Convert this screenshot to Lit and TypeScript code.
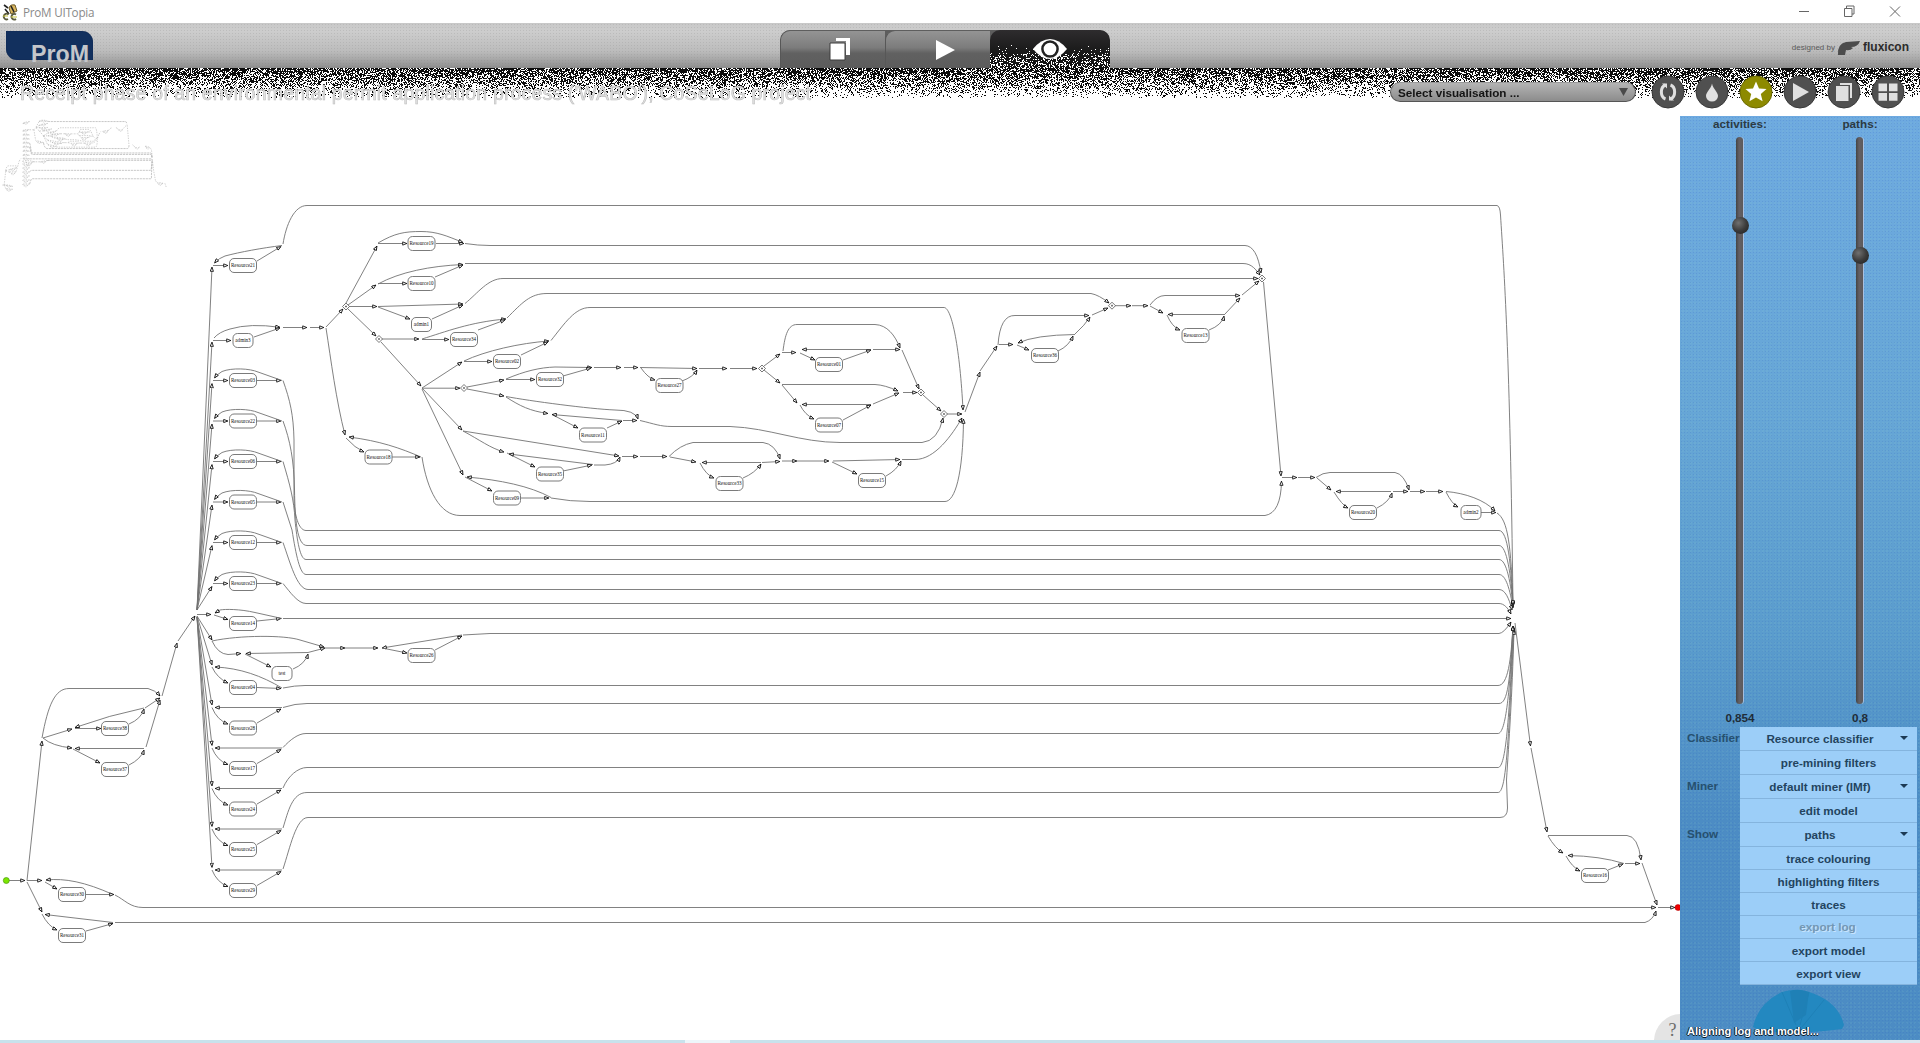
import { LitElement, html, svg, css } from "lit";
import { customElement } from "lit/decorators.js";

type Node = [label: string, x: number, y: number];

const NODES: Node[] = [
  ["Resource21", 243, 265.5], ["admin3", 243, 340.5], ["Resource03", 243, 380.5],
  ["Resource22", 243, 421], ["Resource06", 243, 461.5], ["Resource05", 243, 502],
  ["Resource12", 243, 542.5], ["Resource23", 243, 583.5], ["Resource14", 243, 623.5],
  ["test", 282, 673.5], ["Resource26", 421.5, 655.5], ["Resource04", 243, 687.5],
  ["Resource28", 243, 728], ["Resource17", 243, 768.5], ["Resource24", 243, 809],
  ["Resource25", 243, 849.5], ["Resource29", 243, 890.5],
  ["Resource19", 421.5, 243.5], ["Resource10", 421.5, 283.5], ["admin1", 421.5, 324.5],
  ["Resource34", 464, 339.5], ["Resource02", 507, 361.5], ["Resource32", 550, 379.5],
  ["Resource11", 593, 435], ["Resource35", 550, 474], ["Resource09", 507, 498],
  ["Resource18", 378.5, 457], ["Resource27", 669.5, 385.5], ["Resource01", 829, 364.5],
  ["Resource07", 829, 425], ["Resource33", 729.5, 483.5], ["Resource15", 872, 480.5],
  ["Resource36", 1045, 355.5], ["Resource13", 1195.5, 335.5], ["Resource20", 1363, 512.5],
  ["admin2", 1471, 512.5], ["Resource38", 115, 728.5], ["Resource37", 115, 769.5],
  ["Resource30", 72, 894.5], ["Resource31", 72, 935.5], ["Resource16", 1595, 875.5],
];

const DIAMONDS: [number, number][] = [
  [346, 306.5], [379, 339], [464, 388], [762, 368.5], [921, 392.5], [944, 414],
  [1112, 305.7], [1262, 278.5],
];

/* Rows above the split: box centre, and the path from the row's exit to its long lane. */
const UPPER = [380.5, 421, 461.5, 502, 542.5, 583.5];
const UPPER_EXITS = [
  "M283 380.5C290 400 293.5 415 294 440V500C295 520 300 530.5 306 530.5H1499C1508 530.5 1511 565 1513 606",
  "M283 421C290 440 294 460 294.5 490C295 520 297 545.5 307 545.5H1499C1507 545.5 1511 575 1513 606",
  "M283 461.5C290 485 294 500 295 520C297 540 300 559.5 306 559.5H1499C1507 559.5 1511 585 1513 607",
  "M283 502L292 530C296 555 300 574.5 306 574.5H1499C1506 574.5 1510 590 1513 608",
  "M283 542.5C290 562 297 589.5 308 589.5H1499C1505 589.5 1509 598 1512 610",
  "M283 583.5C290 592 298 603.5 306 603.5H1499C1504 603.5 1508 608 1511 614",
];
const LOWER = [728, 768.5, 809, 849.5, 890.5];
const LOWER_EXITS = [
  "M283 707.5Q295 703.5 307 703.5H1499C1508 703.5 1510 680 1513 626",
  "M283 747.5C290 740 298 733.5 306 733.5H1498C1506 733.5 1510 690 1513 626",
  "M283 788C288 776 298 767.5 307 767.5H1498C1506 767.5 1509 720 1513.5 626",
  "M283 828C288 812 292 792.5 307 792.5H1498C1506 792.5 1508 750 1514 628",
  "M283 869C290 848 296 817.5 308 817.5H1500Q1507.5 817.5 1507.5 808L1506.5 780C1509 740 1512 700 1514 630",
];

const EDGES: string[] = [
  ...UPPER.flatMap((y) => [
    `M197 610L212 ${y + 3}`,
    `M213 ${y}H228`,
    `M257 ${y}H281`,
    `M282 ${y}L258 ${y - 8.5}C250 ${y - 12} 232 ${y - 13} 222 ${y - 9}Q217 ${y - 6} 214.5 ${y - 2.5}`,
  ]),
  ...UPPER_EXITS,
  ...LOWER.flatMap((y) => [
    `M197 617L212 ${y - 23}`,
    `M282 ${y - 20.5}H215`,
    `M212 ${y - 20.5}Q217 ${y - 8} 228 ${y - 4}`,
    `M257 ${y - 5}L281 ${y - 19}`,
  ]),
  ...LOWER_EXITS,
  "M197 610L212 267", "M213 265.5H228", "M257 261L281 246.5",
  "M282 245.5C262 248 240 252 225 256Q219 258 214.5 263",
  "M283 244C286 225 294 205.5 307 205.5H1497Q1500 206 1500.5 215C1504 270 1510 350 1513 606",
  "M197 610L212 342", "M213 340.5H231", "M254 337L280 328",
  "M214 338Q219 332 230 329Q250 323 280 327.3", "M283 327.5H307", "M310 327.5H324",
  "M326 327L343 309", "M326 328C331 360 336 400 345 435",
  "M346 438Q355 448 364 452", "M421 457C400 448 380 441 349 437", "M392 457H420",
  "M422 457C427 490 440 515.5 460 515.5H1265Q1281 513 1281.5 481",
  "M197 614.5H211", "M214 615L228 619.5", "M257 621L281 618.5",
  "M282 618.5L255 612.5C240 609 225 609 220 610L215 613", "M283 618.5H1511",
  "M197 616L212 640", "M212 641C240 635 285 635 300 640L324 647", "M212 641Q218 654 228 654.5L241 653.5",
  "M308 652.5L246 653.5", "M245 654L271 667", "M293 669Q305 664 308 654", "M308 652.5L325 648",
  "M325 648H345", "M345 648H378", "M462 635L382 648", "M382 648L407 653", "M435 650L462 636",
  "M463 635L490 633.5H1499Q1504 633 1511 622",
  "M197 616L212 665", "M282 688C262 676 240 668 215 667", "M212 667Q217 678 228 683", "M257 687.5L281 688.5",
  "M283 688Q295 685.5 305 685.5H1498C1508 685.5 1511 660 1513 626",
  "M346 303L377 246", "M378 243.5H407", "M436 243.5H464",
  "M378 243C395 233 405 231.5 421 231.5C437 231.5 447 236 463 242.5",
  "M465 243.5Q478 245.5 490 245.5H1245Q1257 246 1261 273",
  "M348 305L376 285", "M378 283.5H407", "M378 284C400 272 430 266 463 264.5", "M435 277L463 265",
  "M465 263.5H1243C1252 263.5 1256 270 1260 275",
  "M349 306.5H377", "M378 306.5L463 304", "M378 307L410 319", "M432 319L463 305",
  "M465 303.5C478 293 488 278.5 503 278.5H1258",
  "M348 309L376 336", "M382 339H419", "M422 339.5H449", "M422 339C445 332 470 322 506 319", "M478 330L505 320",
  "M507 318C522 303 530 293.5 547 293.5H1091Q1099 295 1109 303",
  "M381 342L421 386", "M422 388L462 362", "M464 361.5H492", "M464 361C485 351 520 343 549 341", "M521 355L548 342",
  "M551 340.5C565 323 575 307.5 590 307.5H944C952 307.5 960 350 963 410",
  "M422 388.2H460", "M467 387L504 380", "M506 379.5H535", "M506 379C525 371 540 367.5 555 367L592 367.5", "M563 376L591 368",
  "M594 367.5H621", "M624 367.5H638", "M640 367.5L697 368.5", "M641 368Q648 378 655 380", "M682 381Q693 377 697 370",
  "M699 368.5H727", "M730 368.5H757",
  "M467 389L504 396", "M506 396.5C530 401 590 409 615 410Q635 410 638 419", "M506 397C520 406 530 411 548 413.5",
  "M552 414.5L578 428", "M607 428L622 421", "M622 420.5L552 414.5", "M623 420.5H637",
  "M640 420.5C655 424 660 426.5 672 426.5H730C770 428 800 442.5 840 442.5H922Q938 441 943 418",
  "M422 388L462 430", "M463 431L619 456", "M463 431C480 440 490 448 504 452", "M507 453L535 467",
  "M593 464.5L509 454", "M563 471L592 465", "M594 465H605Q617 464 620 457", "M622 456.5H638", "M640 456.5H667",
  "M422 389L463 475", "M465 477L492 491", "M551 497.5C530 486 500 480 467 477", "M521 498H549",
  "M551 498Q570 501.5 590 501.5H945C955 501.5 963 475 963.5 419",
  "M764 366L780 354", "M782 352.5H796", "M783 351C785 335 788 324.5 797 324.5H875C887 325 895 335 900 348",
  "M871 349.5H802", "M800 353L815 360", "M843 360L871 350", "M873 349.5H900", "M902 350L919 389",
  "M764 370L780 383", "M782 384.5H875Q885 385 898 391", "M782 385L797 403", "M871 404.5H802",
  "M800 405Q805 415 814 419", "M843 420L871 405", "M873 404L899 393", "M903 392.5H917",
  "M923 395L941 411", "M947 414H962",
  "M669 456.5Q680 445 693 442.5H763Q775 444 780 459", "M670 457L696 462", "M761 462.5H702",
  "M700 463Q706 475 714 478", "M743 478Q755 473 761 464", "M762 462.5L780 461.5", "M782 461H797", "M797 461H829",
  "M833 461L900 459.5", "M832 462L857 474", "M886 476Q897 470 901 461",
  "M902 459.5H915C935 459.5 952 435 962 418",
  "M965 412L980 372", "M980 371L997 346", "M998 345Q1000 315 1015 315.5H1089", "M999 344.5H1013",
  "M1075 334.5Q1035 335 1018 343", "M1017 345L1029 350", "M1058 351Q1069 346 1073 336",
  "M1075 334Q1085 325 1090 317", "M1092 315L1108 308", "M1115 305.7H1131", "M1132 305.7H1148",
  "M1150 305Q1157 295.5 1165 295.5H1240", "M1150 306L1163 313", "M1225 314.5H1168", "M1167 315Q1172 327 1180 330",
  "M1209 330Q1222 325 1224 316", "M1225 314L1240 298", "M1242 295L1259 281",
  "M1263.5 282L1281 476", "M1282 477.5H1297", "M1298 477.5H1315", "M1316 477.5Q1323 472.5 1330 472.5H1395Q1404 474 1409 490",
  "M1317 478L1331 490", "M1391 491.5H1336", "M1334 492Q1342 505 1348 508", "M1377 508Q1389 502 1392 493",
  "M1393 491.5H1408", "M1410 491.5H1425", "M1426 491.5H1443", "M1446 491.5C1465 493 1485 500 1495 511",
  "M1446 492Q1452 504 1458 507", "M1481 512.5H1496", "M1497 513C1508 520 1511 545 1513 605",
  "M1515 623L1530.5 746", "M1531 748L1547 832", "M1548 835.5H1627Q1638 836 1641 860", "M1548 836Q1555 848 1563 853",
  "M1624 863.5Q1600 856 1568 855.5", "M1566 856Q1572 867 1580 871", "M1608 870L1623 864", "M1625 863.5H1640",
  "M1642 863L1657 905", "M1658 907.5H1675",
  "M9 880.5H25", "M27 880.5L42 741", "M27 880.5H42", "M113 894.5C85 882 65 878 46 880", "M45 882L57 889", "M86 894.5H114",
  "M115 895C125 900 130 907.5 143 907.5H1656", "M27 882L42 912", "M113 922.5L45 914.5", "M42 914Q48 926 57 930",
  "M86 931L113 923.5", "M115 922.5H1645Q1653 920 1656 911",
  "M42 738C48 705 55 688.5 69 688.5H148Q155 690 160 696", "M43 738L72 729", "M75 728.5H101", "M144 708Q110 715 75 727.5",
  "M129 724Q141 719 144 709", "M145 708L160 698", "M43 738Q52 746 72 748", "M144 748.5H75", "M73 749L100 763",
  "M129 765Q141 759 144 750", "M146 747L160 700", "M162 696L177 643", "M178 641L195 616",
];

/* The overview only keeps a few of the long lanes. */
const isLane = (d: string) => /H1[0-9]{3}/.test(d);
const OVERVIEW_LANES = /[ V](245|515|559|574|733|817)\.5H1|618\.5H1511|633\.5H1/;
const MINI_SHORT = EDGES.filter((d) => !isLane(d) && !/^M197/.test(d));
const MINI_LANES = EDGES.filter((d) => isLane(d) && OVERVIEW_LANES.test(d));

const nodeShape = ([label, x, y]: Node) => {
  const w = label.startsWith("Resource") ? 27 : 20;
  return svg`<rect class="box" x=${x - w / 2} y=${y - 7} width=${w} height="14" rx="4.5"></rect>
    <text class="lbl" x=${x} y=${y + 1.7}>${label}</text>`;
};

@customElement("process-graph")
class ProcessGraph extends LitElement {
  static styles = css`
    :host { display: block; overflow: hidden; }
    svg { display: block; }
    .edge { fill: none; stroke: #737373; stroke-width: 0.9; }
    .box { fill: #fff; stroke: #6c6c6c; stroke-width: 0.9; }
    .lbl { font: 5.1px "Liberation Serif", serif; text-anchor: middle; fill: #111; }
    .dia { fill: #fff; stroke: #555; stroke-width: 0.8; }
    .arrow { fill: #fff; stroke: #000; stroke-width: 0.75; }
    .mini { fill: none; stroke: #a8a8a8; stroke-width: 6; stroke-dasharray: 14 11; opacity: 0.9; }
    .mini-lane { fill: none; stroke: #a8a8a8; stroke-width: 8; stroke-dasharray: 22 8; opacity: 0.8; }
    .mini-box { fill: none; stroke: #b4b4b4; stroke-width: 5; stroke-dasharray: 12 12; }
    .start { fill: #7be600; stroke: #4c9a10; stroke-width: 0.7; }
    .end { fill: #ee0000; stroke: #a00; stroke-width: 0.5; }
    .help { fill: #e4e4e4; }
    .q { font: 18px "Liberation Serif", serif; fill: #6c6c6c; text-anchor: middle; }
  `;
  render() {
    return html`<svg width="1680" height="924" viewBox="0 116 1680 924">
      <defs>
        <marker id="a" viewBox="0 0 5 4" refX="4.6" refY="2" markerWidth="5.4" markerHeight="4.3"
          markerUnits="userSpaceOnUse" orient="auto">
          <path class="arrow" d="M.6 .5L4.4 2L.6 3.5Z"></path>
        </marker>
      </defs>
      <g transform="translate(1.5 97) scale(.0995 .1)">
        ${MINI_SHORT.map((d) => svg`<path class="mini" d=${d}></path>`)}
        ${MINI_LANES.map((d) => svg`<path class="mini-lane" d=${d}></path>`)}
        ${NODES.map(([, x, y]) => svg`<rect class="mini-box" x=${x - 14} y=${y - 7} width="28" height="14"></rect>`)}
      </g>
      ${EDGES.map((d) => svg`<path class="edge" d=${d} marker-end="url(#a)"></path>`)}
      ${NODES.map(nodeShape)}
      ${DIAMONDS.map(([x, y]) => svg`<path class="dia" d=${`M${x - 3.5} ${y}l3.5 -3.5l3.5 3.5l-3.5 3.5zM${x - 1} ${y}h2M${x} ${y - 1}v2`}></path>`)}
      <circle class="start" cx="6.3" cy="880.5" r="3"></circle>
      <circle class="end" cx="1678" cy="907.5" r="3"></circle>
      <circle class="help" cx="1681" cy="1041" r="27"></circle>
      <text class="q" x="1672.5" y="1035.5">?</text>
    </svg>`;
  }
}

@customElement("grain-band")
class GrainBand extends LitElement {
  static styles = css`
    :host { display: block; pointer-events: none; }
    canvas { display: block; }
  `;
  render() {
    return html`<canvas width="1920" height="69"></canvas>`;
  }
  /* Speckle that thins out from the header's lower edge, and light specks on the active tab. */
  firstUpdated() {
    const ctx = this.renderRoot.querySelector("canvas")!.getContext("2d")!;
    let s = 90210;
    const rnd = () => {
      s = (s * 1664525 + 1013904223) >>> 0;
      return s / 4294967296;
    };
    ctx.fillStyle = "#0c0c0c";
    for (let y = 38; y < 68; y++) {
      const p = 0.74 * Math.pow(1 - (y - 38) / 31, 0.85);
      for (let x = 0; x < 1920; x++) if (rnd() < p) ctx.fillRect(x, y, 1, 1);
    }
    ctx.fillStyle = "#fff";
    for (let y = 10; y < 38; y++) {
      const p = y < 18 ? 0.004 : y < 23 ? 0.04 : 0.14 + (y - 22) * 0.014;
      for (let x = 990; x < 1110; x++) if (rnd() < p) ctx.fillRect(x, y, 1, 1);
    }
  }
}

const TOOLS = [
  svg`<path class="ring" d="M-2.5-7C-8-5-8 5-2.5 7M2.5-7C8-5 8 5 2.5 7"></path><path d="M-6-8.5h5v5zM6 8.5h-5v-5z"></path>`,
  svg`<path d="M0-8.5C1-3 6 0 6 4A6 5.5 0 0 1-6 4C-6 0-1-3 0-8.5Z"></path>`,
  svg`<path d="M0-10.5L3-3.6L10.5-3L4.8 2L6.6 9.3L0 5.4L-6.6 9.3L-4.8 2L-10.5-3L-3-3.6Z"></path>`,
  svg`<path d="M-7-9L9 0L-7 9Z"></path>`,
  svg`<path d="M-4-9H8V6H6V-7H-4ZM-8-6H4.5V9H-8Z"></path>`,
  svg`<path d="M-9.5-8.5h8.5v7.7h-8.5zM1-8.5h8.5v7.7h-8.5zM-9.5 1h8.5v7.7h-8.5zM1 1h8.5v7.7h-8.5z"></path>`,
];

const ACTIONS: { label: string; caption?: string; menu?: boolean; off?: boolean; tall?: boolean }[] = [
  { label: "Resource classifier", caption: "Classifier", menu: true, tall: true },
  { label: "pre-mining filters", tall: true },
  { label: "default miner (IMf)", caption: "Miner", menu: true, tall: true },
  { label: "edit model", tall: true },
  { label: "paths", caption: "Show", menu: true, tall: true },
  { label: "trace colouring" },
  { label: "highlighting filters" },
  { label: "traces" },
  { label: "export log", off: true },
  { label: "export model" },
  { label: "export view" },
];

const SLIDERS = [
  { name: "activities:", value: "0,854", top: 80 },
  { name: "paths:", value: "0,8", top: 110 },
];

@customElement("side-panel")
class SidePanel extends LitElement {
  static styles = css`
    :host {
      display: flex; flex-direction: column; width: 240px; height: 924px; overflow: hidden;
      background:
        radial-gradient(circle, rgba(52, 100, 190, 0.2) 0.6px, transparent 0.8px) 0 0 / 3px 3px,
        radial-gradient(circle, rgba(150, 210, 205, 0.22) 0.6px, transparent 0.8px) 1px 1px / 4px 4px,
        linear-gradient(#6eaae0 0, #66a6d6 300px, #5a9ccd 520px, #4c8cc4 700px, #4c8cc4 100%);
      font: bold 11.7px "Liberation Sans", Arial, sans-serif; color: #24333f;
    }
    .sliders { display: grid; grid-template-columns: 120px 120px; height: 611px; }
    .slider { display: flex; flex-direction: column; align-items: center; }
    .name { height: 21px; line-height: 15px; color: #2c3a44; }
    .track {
      width: 7px; height: 567px; border-radius: 4px; position: relative; margin-right: 1px;
      background: linear-gradient(90deg, #444, #646064 45%, #5c5a5c);
      box-shadow: 1px 0 0 rgba(190, 200, 225, 0.75);
    }
    .knob {
      position: absolute; left: -4px; width: 17px; height: 17px; border-radius: 50%;
      background: radial-gradient(circle at 38% 35%, #707070, #3c3c3c 50%, #1c1c1c);
    }
    .value { line-height: 16px; padding-top: 6px; color: #1f2c38; }
    .rows { display: flex; flex-direction: column; gap: 1px; }
    .row { display: grid; grid-template-columns: 60px 177px; height: 22px; }
    .row.tall { height: 23px; }
    .caption { padding-left: 7px; line-height: 21px; color: #26506f; white-space: nowrap; }
    .btn {
      display: flex; align-items: center; background: #9ccef8; color: #23445f;
      box-shadow: 0 1px 0 #84b4de;
    }
    .text { flex: 1; text-align: center; padding-top: 0; }
    .btn.off { color: #7397b4; text-shadow: 1px 1px 0 #c8e4fc; }
    .btn.off .text { padding: 0 2px 1px 0; }
    .caret { width: 8px; height: 4px; margin: 0 9px 1px 0; background: #1c3a55; clip-path: polygon(0 0, 100% 0, 50% 100%); }
    .foot { position: relative; flex: 1; }
    .foot svg { position: absolute; left: 72px; top: 5px; }
    .status {
      position: absolute; left: 7px; top: 41px; white-space: nowrap; color: #fff; font-size: 11.1px;
      text-shadow: -1px 0 0 #0a1c2e, 0 1px 0 #0a1c2e, 1px 0 0 rgba(10, 28, 46, 0.6);
    }
  `;
  render() {
    return html`
      <div class="sliders">
        ${SLIDERS.map((s) => html`<div class="slider">
          <span class="name">${s.name}</span>
          <div class="track"><div class="knob" style="top:${s.top}px"></div></div>
          <span class="value">${s.value}</span>
        </div>`)}
      </div>
      <div class="rows">
        ${ACTIONS.map((a) => html`<div class="row ${a.tall ? "tall" : ""}">
          <span class="caption">${a.caption ?? ""}</span>
          <div class="btn ${a.off ? "off" : ""}">
            <span class="text">${a.label}</span>${a.menu ? html`<i class="caret"></i>` : ""}
          </div>
        </div>`)}
      </div>
      <div class="foot">
        <svg width="94" height="44" viewBox="0 0 94 44">
          <path d="M1 38Q6 14 30 3Q42-1 57 3Q86 12 92 36L90 40Q46 46 8 42Z" fill="#2388c0"></path>
          <path d="M38 2Q46-1 57 3L54 26L42 34Z" fill="#1f80b6"></path>
          <path d="M30 3L44 36M57 3L48 36M72 11L50 38" stroke="#1f80b6" fill="none"></path>
        </svg>
        <span class="status">Aligning log and model...</span>
      </div>`;
  }
}

@customElement("app-root")
class AppRoot extends LitElement {
  static styles = css`
    :host {
      display: grid; grid-template-rows: 23px 45px 48px 924px 3px; width: 1920px; height: 1043px;
      background: #fff; position: relative; overflow: hidden;
      font-family: "Liberation Sans", Arial, sans-serif;
    }
    .titlebar { display: flex; align-items: center; }
    .titlebar .app { margin: 0 4px 0 2px; }
    .titlebar .name { font: 11.7px "Open Sans", "Noto Sans", sans-serif; color: #8a8a8a; letter-spacing: -0.25px; flex: 1; }
    .wins { margin: 0 19px 2px 0; }
    .header {
      display: flex; align-items: flex-start; justify-content: space-between;
      background:
        radial-gradient(circle, rgba(120, 120, 120, 0.18) 0.6px, transparent 0.8px) 0 0 / 3px 3px,
        linear-gradient(#c8c8c8, #cdcdcd 18%, #bcbcbc 62%, #a8a8a8 80%, #8e8e8e);
    }
    .side { width: 780px; display: flex; }
    .logo {
      display: flex; justify-content: flex-end; align-items: flex-end;
      margin: 8px 0 0 6px; width: 87px; height: 29px; background: #12305e;
      border-radius: 0 11px 0 11px; box-shadow: inset 0 0 1px #0a1c3c; color: #c4c6ca;
      font: bold 23.2px/16px "Liberation Sans", sans-serif;
    }
    .logo span { padding-right: 4px; height: 14px; }
    .tabs { display: flex; margin-top: 7px; width: 330px; height: 38px; background: #5d5d5d; border-radius: 10px 10px 0 0; overflow: hidden; }
    .tab {
      display: flex; align-items: center; justify-content: center; flex: 0 0 105px; padding: 0 0 0 14px;
      background: linear-gradient(#949494, #7c7c7c 45%, #616161 60%, #5c5c5c);
      border-top: 1px solid #5e5e5e; border-left: 1px solid #575757; border-radius: 10px 0 0 0; box-sizing: border-box;
    }
    .tab.on { flex: 1; padding: 0; background: linear-gradient(#2e2c2e, #1c1c1c 50%, #101010); border: 0; border-radius: 10px 10px 0 0; }
    .tab svg { overflow: visible; }
    .brand { justify-content: flex-end; align-items: center; width: 810px; height: 47px; }
    .brand .by { font-size: 8px; color: #5a5a5a; padding-top: 1px; }
    .brand svg { margin: 3px 2px 0 2px; }
    .brand b { font-size: 12px; color: #2c2c2c; margin-right: 11px; }
    .sub { display: flex; position: relative; z-index: 2; }
    .title { margin-left: 20px; flex: 1; }
    .title text { font: 19.5px "Liberation Sans", sans-serif; fill: #e2e2e2; stroke: #bebebe; stroke-width: 0.6; }
    .select {
      display: flex; align-items: center; justify-content: space-between; box-sizing: border-box;
      width: 246px; height: 20px; margin: 14px 15px 0 0; padding: 0 7px; border-radius: 10px;
      background: linear-gradient(#b4b4b4, #8c8c8c); border: 1px solid #555; border-top-color: #999;
      font-weight: bold; font-size: 11.7px; color: #141414;
    }
    .caret { width: 9px; height: 8px; background: #4a4a4a; clip-path: polygon(0 0, 100% 0, 50% 100%); }
    .tools { display: flex; gap: 10px; margin: 7px 15px 0 0; height: 34px; }
    .tool .disc { fill: #505050; stroke: #383838; }
    .tool.gold .disc { fill: #8d8a00; stroke: #6b6900; }
    .tool g { fill: #e0e0e0; }
    .tool .ring { fill: none; stroke: #e0e0e0; stroke-width: 3; }
    .tool.gold g { fill: #fff; }
    .main { display: grid; grid-template-columns: 1680px 240px; }
    .strip { background: linear-gradient(90deg, #c8e2ec 0 685px, #edf6fa 685px 730px, #c8e2ec 730px 1680px, #dce6f0 1680px); }
    .grain { position: absolute; left: 0; top: 30px; z-index: 1; }
    .eye { position: absolute; left: 1032px; top: 38px; z-index: 2; }
  `;
  render() {
    return html`
      <div class="titlebar">
        <svg class="app" width="17" height="18" viewBox="0 0 17 18">
          <path d="M7 5Q8 1 13 2L15 8L9 11Z" fill="#d8b45c" stroke="#6b5a2a"></path>
          <path d="M2 2L6 5M3 6L7 11M9 3l3 6" stroke="#222" stroke-width="1.6"></path>
          <path d="M6.5 11.5A2.8 2.8 0 1 0 6 16M14 11.5A2.8 2.8 0 1 0 14 16" fill="none" stroke="#5a5a3c" stroke-width="1.8"></path>
          <path d="M1 13h5M9 14h6" stroke="#c8c43c"></path>
        </svg>
        <span class="name">ProM UITopia</span>
        <svg class="wins" width="106" height="14" fill="none" stroke="#666">
          <path d="M4 7.5H14M49.5 4.5h7.5v8h-7.5zM51.5 4.5v-2.5h7.5v8h-2M95 2.5l10 10M105 2.5l-10 10"></path>
        </svg>
      </div>
      <div class="header">
        <div class="side"><div class="logo"><span>ProM</span></div></div>
        <div class="tabs">
          <div class="tab"><svg width="20" height="23" viewBox="0 0 20 23">
            <path d="M6 0H20V17H16V3H6Z" fill="#fff"></path><path d="M0 5H15V22H0Z" fill="#fff" stroke="#3c3c3c"></path></svg></div>
          <div class="tab"><svg width="20" height="20" viewBox="0 0 20 20"><path d="M1 0L20 10L1 20Z" fill="#fff"></path></svg></div>
          <div class="tab on"></div>
        </div>
        <div class="side brand">
          <span class="by">designed by</span>
          <svg width="24" height="15" viewBox="0 0 24 15">
            <path d="M1 14Q0 3 9 1L23 0Q21 6 14 6L16 7Q13 10 9 9L8 14Z" fill="#4c4c4c"></path>
          </svg>
          <b>fluxicon</b>
        </div>
      </div>
      <div class="sub">
        <svg class="title" height="48"><text x="0" y="32" textLength="791">Receipt phase of an environmental permit application process ('WABO'), CoSeLoG project</text></svg>
        <div class="select"><span>Select visualisation ...</span><i class="caret"></i></div>
        <div class="tools">
          ${TOOLS.map((t, i) => html`<svg class="tool ${i === 2 ? "gold" : ""}" width="34" height="34" viewBox="-17 -17 34 34">
            <circle class="disc" r="16"></circle><g>${t}</g></svg>`)}
        </div>
      </div>
      <div class="main">
        <process-graph></process-graph>
        <side-panel></side-panel>
      </div>
      <div class="strip"></div>
      <grain-band class="grain"></grain-band>
      <svg class="eye" width="36" height="22" viewBox="-18 -11 36 22">
        <path d="M-17 0Q-9-10 0-10Q9-10 17 0Q9 10 0 10Q-9 10-17 0Z" fill="#fff"></path>
        <circle r="7.6" fill="none" stroke="#222" stroke-width="2.5"></circle><circle r="5.4" fill="#fff"></circle>
      </svg>`;
  }
}
